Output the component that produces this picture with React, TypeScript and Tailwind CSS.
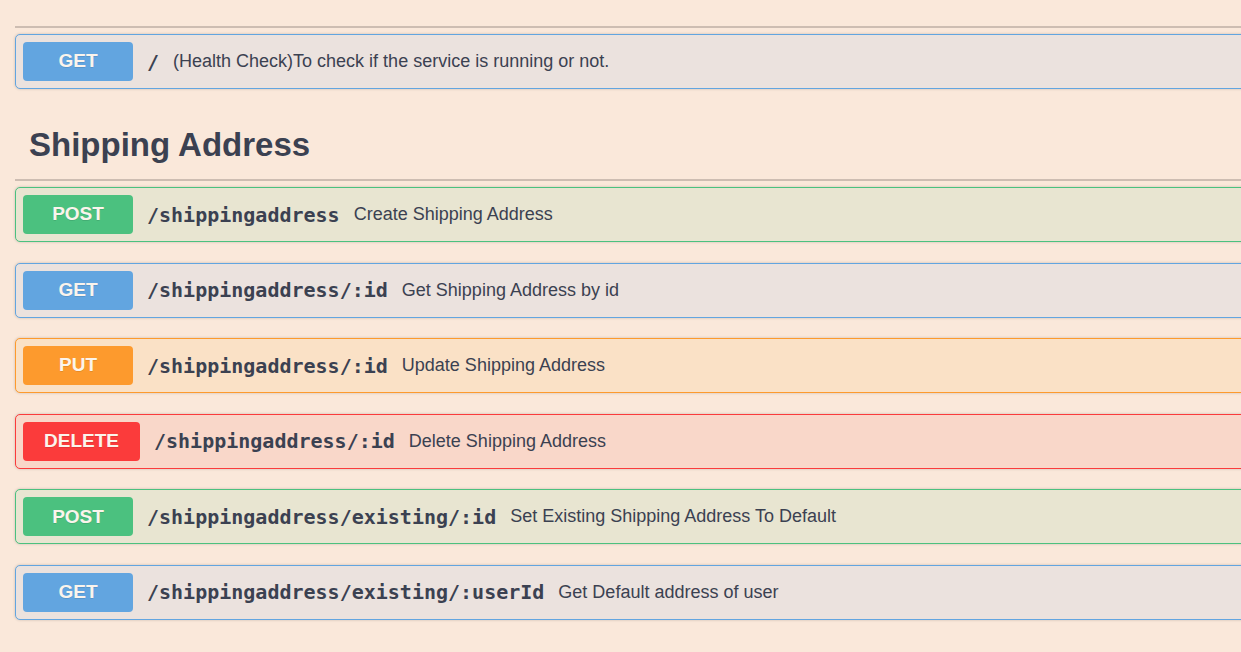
import React from 'react';

type Method = 'GET' | 'POST' | 'PUT' | 'DELETE';

interface Endpoint {
    method: Method;
    path: string;
    summary: string;
}

const styles: Record<Method, { block: string; badge: string }> = {
    GET: { block: 'bg-[#ebe2de] border-[#62a5e0]', badge: 'bg-[#62a5e0] w-[110px]' },
    POST: { block: 'bg-[#e8e5d1] border-[#4bc17f]', badge: 'bg-[#4bc17f] w-[110px]' },
    PUT: { block: 'bg-[#fae1c6] border-[#fd9a2d]', badge: 'bg-[#fd9a2d] w-[110px]' },
    DELETE: { block: 'bg-[#f9d7c9] border-[#fb3b3b]', badge: 'bg-[#fb3b3b] w-[117px]' },
};

const shippingEndpoints: Endpoint[] = [
    { method: 'POST', path: '/shippingaddress', summary: 'Create Shipping Address' },
    { method: 'GET', path: '/shippingaddress/:id', summary: 'Get Shipping Address by id' },
    { method: 'PUT', path: '/shippingaddress/:id', summary: 'Update Shipping Address' },
    { method: 'DELETE', path: '/shippingaddress/:id', summary: 'Delete Shipping Address' },
    { method: 'POST', path: '/shippingaddress/existing/:id', summary: 'Set Existing Shipping Address To Default' },
    { method: 'GET', path: '/shippingaddress/existing/:userId', summary: 'Get Default address of user' },
];

const OpBlock: React.FC<Endpoint> = ({ method, path, summary }) => {
    const s = styles[method];
    return (
        <div className={`flex items-center h-[55px] px-[7px] border rounded-[5px] shadow-[0_0_3px_rgba(0,0,0,0.19)] ${s.block}`}>
            <span
                className={`${s.badge} h-[39px] flex items-center justify-center rounded-[4px] text-[#fbf4ec] text-[19px] font-bold [text-shadow:0_1px_0_rgba(0,0,0,0.1)] shrink-0`}
                style={{ fontFamily: '"Liberation Sans", Arial, sans-serif' }}
            >
                {method}
            </span>
            <span
                className="ml-[14px] text-[20px] font-bold text-[#3b4151] whitespace-nowrap"
                style={{ fontFamily: '"DejaVu Sans Mono", monospace' }}
            >
                {path}
            </span>
            <span
                className="ml-[14px] text-[18px] text-[#3b4151] whitespace-nowrap"
                style={{ fontFamily: '"Liberation Sans", Arial, sans-serif' }}
            >
                {summary}
            </span>
        </div>
    );
};

export default function App() {
    return (
        <div className="min-h-screen w-full overflow-hidden bg-[#fae8da]">
            <div className="pl-[15px] w-[1400px]">
                {/* previous section tail */}
                <div className="h-[28px] border-b-2 border-[#cdbdb2]" />
                <div className="mt-[6px]">
                    <OpBlock method="GET" path="/" summary="(Health Check)To check if the service is running or not." />
                </div>

                {/* Shipping Address */}
                <div className="mt-[22px]">
                    <h3
                        className="pl-[14px] py-[14px] text-[33px] leading-[40px] font-bold text-[#3b4151] border-b-2 border-[#cdbdb2]"
                        style={{ fontFamily: '"Liberation Sans", Arial, sans-serif' }}
                    >
                        Shipping Address
                    </h3>
                    <div className="mt-[6px] flex flex-col gap-[20.6px]">
                        {shippingEndpoints.map((e, i) => (
                            <OpBlock key={i} {...e} />
                        ))}
                    </div>
                </div>
            </div>
        </div>
    );
}
